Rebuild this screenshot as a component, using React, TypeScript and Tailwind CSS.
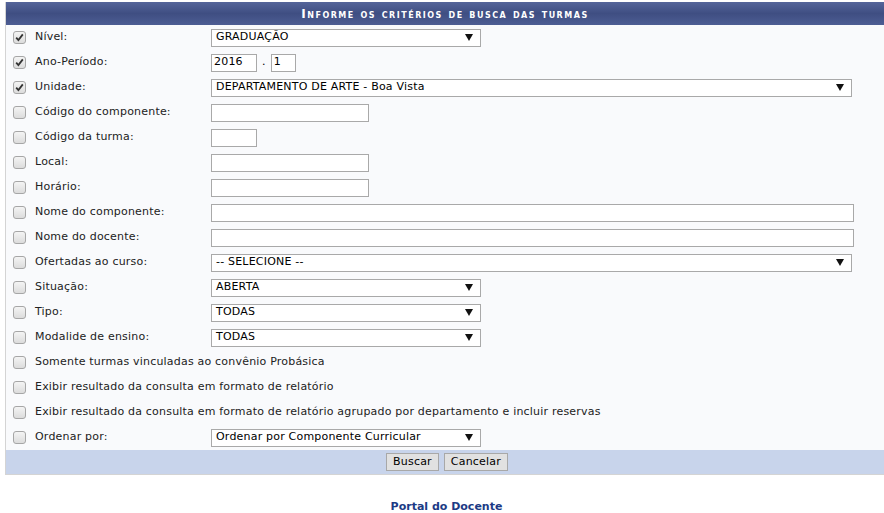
import React from 'react'

const font = { fontFamily: '"DejaVu Sans", Verdana, sans-serif' }

function Check({ on }: { on?: boolean }) {
  return (
    <span className="inline-flex h-[13px] w-[13px] items-center justify-center rounded-[3px] border border-[#a6a6a6] bg-gradient-to-b from-[#f4f4f4] to-[#dcdcdc]">
      {on && (
        <svg width="9" height="9" viewBox="0 0 9 9">
          <path d="M1.2 4.6 L3.4 7 L7.8 1.4" stroke="#333" strokeWidth="1.8" fill="none" />
        </svg>
      )}
    </span>
  )
}

function Select({ value, width }: { value: string; width: string }) {
  return (
    <div className={`flex h-[18px] items-center justify-between border border-[#a9a9a9] bg-white pl-[4px] pr-[7px] text-[11px] text-black ${width}`}>
      <span>{value}</span>
      <svg width="8" height="7" viewBox="0 0 8 7">
        <path d="M0 0 H8 L4 7 Z" fill="#111" />
      </svg>
    </div>
  )
}

function Field({ width, value }: { width: string; value?: string }) {
  return (
    <div className={`flex h-[18px] items-center border border-[#a9a9a9] bg-white pl-[2px] text-[11px] text-black ${width}`}>
      {value}
    </div>
  )
}

type Row = { label: string; on?: boolean; input?: React.ReactNode }

const rows: Row[] = [
  { label: 'Nível:', on: true, input: <Select value="GRADUAÇÃO" width="w-[270px]" /> },
  {
    label: 'Ano-Período:',
    on: true,
    input: (
      <div className="flex items-center">
        <Field width="w-[46px]" value="2016" />
        <span className="mx-[5px] text-[11px]">.</span>
        <Field width="w-[25px]" value="1" />
      </div>
    ),
  },
  { label: 'Unidade:', on: true, input: <Select value="DEPARTAMENTO DE ARTE - Boa Vista" width="w-[641px]" /> },
  { label: 'Código do componente:', input: <Field width="w-[158px]" /> },
  { label: 'Código da turma:', input: <Field width="w-[46px]" /> },
  { label: 'Local:', input: <Field width="w-[158px]" /> },
  { label: 'Horário:', input: <Field width="w-[158px]" /> },
  { label: 'Nome do componente:', input: <Field width="w-[643px]" /> },
  { label: 'Nome do docente:', input: <Field width="w-[643px]" /> },
  { label: 'Ofertadas ao curso:', input: <Select value="-- SELECIONE --" width="w-[641px]" /> },
  { label: 'Situação:', input: <Select value="ABERTA" width="w-[270px]" /> },
  { label: 'Tipo:', input: <Select value="TODAS" width="w-[270px]" /> },
  { label: 'Modalide de ensino:', input: <Select value="TODAS" width="w-[270px]" /> },
  { label: 'Somente turmas vinculadas ao convênio Probásica' },
  { label: 'Exibir resultado da consulta em formato de relatório' },
  { label: 'Exibir resultado da consulta em formato de relatório agrupado por departamento e incluir reservas' },
  { label: 'Ordenar por:', input: <Select value="Ordenar por Componente Curricular" width="w-[270px]" /> },
]

export default function App() {
  return (
    <div className="h-[513px] w-[884px] bg-white pt-[2px] tracking-[0.2px]" style={font}>
      <div className="ml-[5px] border-b border-l border-[#d4d4d4] bg-[#f9fafc]">
        <div className="flex h-[23px] items-center justify-center bg-gradient-to-b from-[#55659a] via-[#3f4e82] to-[#4d5d93] pt-[1px] text-[12px] font-bold tracking-[1.5px] text-white [font-variant:small-caps]">
          Informe os critérios de busca das turmas
        </div>
        {rows.map((r) => (
          <div key={r.label} className="flex h-[25px] items-center">
            <div className="ml-[7px] flex w-[22px] items-center">
              <Check on={r.on} />
            </div>
            <div className={`${r.input ? 'w-[176px]' : ''} text-[11px] text-[#222]`}>{r.label}</div>
            {r.input}
          </div>
        ))}
        <div className="flex h-[24px] items-center justify-center gap-[5px] bg-[#c8d4eb] pl-[4px]">
          <button className="h-[18px] border border-[#a8a8a8] bg-[#e1e1e1] px-[6px] text-[11px] text-black">Buscar</button>
          <button className="h-[18px] border border-[#a8a8a8] bg-[#e1e1e1] px-[6px] text-[11px] text-black">Cancelar</button>
        </div>
      </div>
      <div className="mt-[25px] pl-[9px] text-center text-[11px] leading-[14px] font-bold tracking-normal text-[#1c3a85]">Portal do Docente</div>
    </div>
  )
}
